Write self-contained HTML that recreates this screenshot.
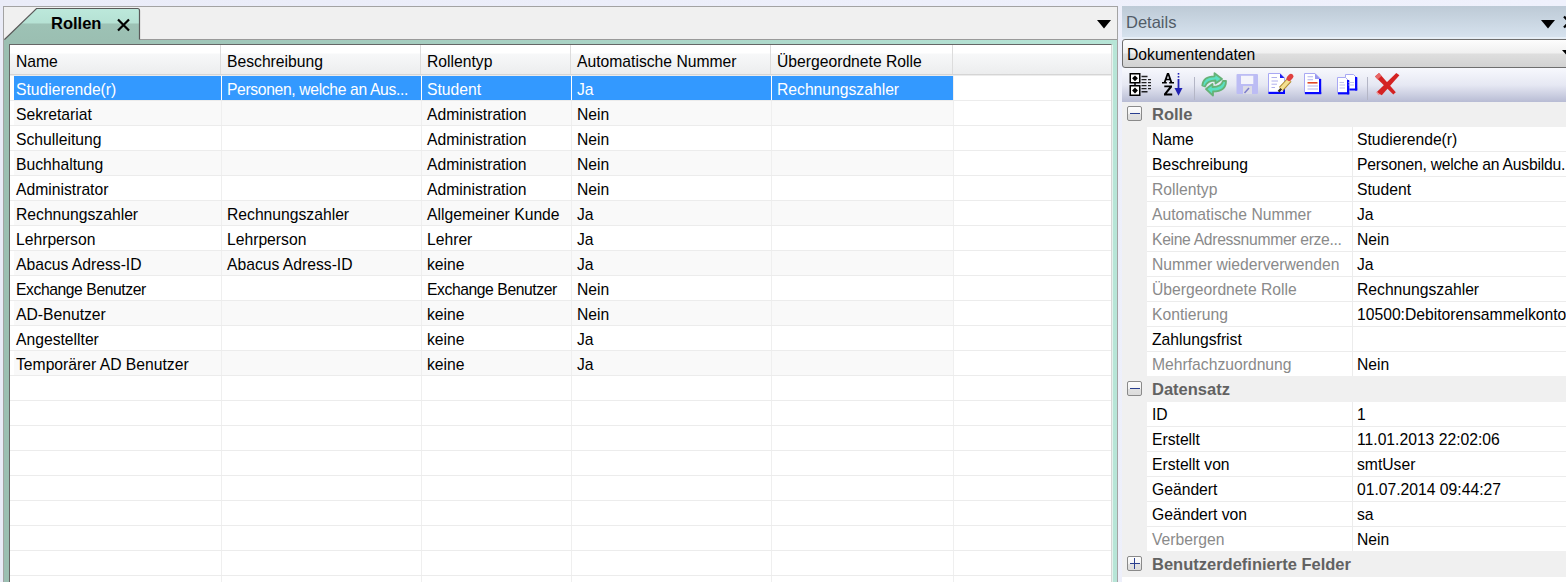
<!DOCTYPE html>
<html><head><meta charset="utf-8">
<style>
*{margin:0;padding:0;box-sizing:border-box}
html,body{width:1566px;height:582px;overflow:hidden;background:linear-gradient(to right,#eaecf8,#eff1fc);font-family:"Liberation Sans",sans-serif;font-size:15.7px;color:#000}
.a{position:absolute}
.t{position:absolute;white-space:nowrap;line-height:25px;height:25px}
#strip{left:3px;top:6px;width:1115px;height:600px;background:#f0f0f0;border:1px solid #a3a3a3}
#frame{left:4px;top:39px;width:1113px;height:560px;background:linear-gradient(to right,#9bbfb2,#b7e5d7);border-top:1px solid #9a9a9a}
#grid{left:9px;top:44px;width:1103px;height:560px;background:#fff;border-top:1px solid #666;border-left:1px solid #666;border-right:1px solid #d6d6d6}
#hdr{left:10px;top:45px;width:1101px;height:30px;background:linear-gradient(#fff 0,#fff 8px,#f7f8f9 9px,#ecedee 29px);border-bottom:1px solid #d5d5d5}
.hsep{position:absolute;top:45px;width:1px;height:29px;background:#dcdcdc}
.row{position:absolute;left:14px;width:1097px;height:24px}
.rl{position:absolute;left:10px;width:1101px;height:1px;background:#ececec}
.vsep{position:absolute;top:75px;width:1px;height:507px;background:#efefef}
#sel{left:14px;top:76px;width:939px;height:24px;background:#3399ff}
.selgap{position:absolute;top:76px;width:1px;height:24px;background:#fff}
.box{position:absolute;left:1127px;width:15px;height:15px;border:1px solid #8a8a8a;border-radius:2px;background:linear-gradient(#fdfdfd 0,#f4f4f4 50%,#e2e2e2 51%,#dcdcdc)}
</style></head><body>
<div id="strip" class="a"></div>
<div id="frame" class="a"></div>
<!-- tab -->
<svg class="a" style="left:0;top:0" width="160" height="46">
  <defs>
    <linearGradient id="tg" x1="0" y1="0" x2="0" y2="1">
      <stop offset="0" stop-color="#bce8db"/><stop offset="0.45" stop-color="#b6e2d4"/>
      <stop offset="0.5" stop-color="#9dc2b5"/><stop offset="1" stop-color="#9bbfb2"/>
    </linearGradient>
  </defs>
  <path d="M4.5,39.5 L36.5,8.5 L137.5,8.5 Q139.5,8.5 139.5,10.5 L139.5,40 L4.5,40 Z" fill="url(#tg)" stroke="none"/>
  <path d="M4.5,39.5 L36.5,8.5 L137.5,8.5 Q139.5,8.5 139.5,10.5 L139.5,39.5" fill="none" stroke="#5a5a5a" stroke-width="1.2"/>
  <rect x="4" y="40" width="136" height="4" fill="#9bbfb2"/>
</svg>
<div class="t" style="left:51px;top:11px;font-weight:bold;font-size:16.5px">Rollen</div>
<svg class="a" style="left:116px;top:18px" width="16" height="14"><path d="M2,1.5 L13,12.5 M13,1.5 L2,12.5" stroke="#000" stroke-width="2.2"/></svg>
<svg class="a" style="left:1096px;top:19px" width="16" height="10"><path d="M1,1 L15,1 L8,9.5 Z" fill="#000"/></svg>

<div id="grid" class="a"></div>
<div class="a" style="left:1112px;top:45px;width:1px;height:540px;background:#e4f3ee"></div>
<div id="hdr" class="a"></div>
<div class="hsep" style="left:220px"></div>
<div class="hsep" style="left:420px"></div>
<div class="hsep" style="left:570px"></div>
<div class="hsep" style="left:770px"></div>
<div class="hsep" style="left:952px"></div>
<div class="t" style="left:16px;top:49px">Name</div>
<div class="t" style="left:227px;top:49px">Beschreibung</div>
<div class="t" style="left:427px;top:49px">Rollentyp</div>
<div class="t" style="left:577px;top:49px">Automatische Nummer</div>
<div class="t" style="left:777px;top:49px">Übergeordnete Rolle</div>

<div class="a" style="left:14px;top:101px;width:939px;height:24px;background:#f9f9f9"></div>
<div class="a" style="left:14px;top:151px;width:939px;height:24px;background:#f9f9f9"></div>
<div class="a" style="left:14px;top:201px;width:939px;height:24px;background:#f9f9f9"></div>
<div class="a" style="left:14px;top:251px;width:939px;height:24px;background:#f9f9f9"></div>
<div class="a" style="left:14px;top:301px;width:939px;height:24px;background:#f9f9f9"></div>
<div class="a" style="left:14px;top:351px;width:939px;height:24px;background:#f9f9f9"></div>
<div class="vsep" style="left:221px"></div>
<div class="vsep" style="left:421px"></div>
<div class="vsep" style="left:571px"></div>
<div class="vsep" style="left:771px"></div>
<div class="vsep" style="left:953px"></div>
<div class="rl" style="top:75px"></div>
<div class="rl" style="top:100px"></div>
<div class="rl" style="top:125px"></div>
<div class="rl" style="top:150px"></div>
<div class="rl" style="top:175px"></div>
<div class="rl" style="top:200px"></div>
<div class="rl" style="top:225px"></div>
<div class="rl" style="top:250px"></div>
<div class="rl" style="top:275px"></div>
<div class="rl" style="top:300px"></div>
<div class="rl" style="top:325px"></div>
<div class="rl" style="top:350px"></div>
<div class="rl" style="top:375px"></div>
<div class="rl" style="top:400px"></div>
<div class="rl" style="top:425px"></div>
<div class="rl" style="top:450px"></div>
<div class="rl" style="top:475px"></div>
<div class="rl" style="top:500px"></div>
<div class="rl" style="top:525px"></div>
<div class="rl" style="top:550px"></div>
<div class="rl" style="top:575px"></div>
<div id="sel" class="a"></div>
<div class="selgap" style="left:221px"></div>
<div class="selgap" style="left:421px"></div>
<div class="selgap" style="left:571px"></div>
<div class="selgap" style="left:771px"></div>
<div class="t" style="left:16px;top:77px;color:#fff">Studierende(r)</div>
<div class="t" style="left:227px;top:77px;color:#fff"><span style="letter-spacing:-0.35px">Personen, welche an Aus...</span></div>
<div class="t" style="left:427px;top:77px;color:#fff">Student</div>
<div class="t" style="left:577px;top:77px;color:#fff">Ja</div>
<div class="t" style="left:777px;top:77px;color:#fff">Rechnungszahler</div>
<div class="t" style="left:16px;top:102px;color:#000">Sekretariat</div>
<div class="t" style="left:427px;top:102px;color:#000">Administration</div>
<div class="t" style="left:577px;top:102px;color:#000">Nein</div>
<div class="t" style="left:16px;top:127px;color:#000">Schulleitung</div>
<div class="t" style="left:427px;top:127px;color:#000">Administration</div>
<div class="t" style="left:577px;top:127px;color:#000">Nein</div>
<div class="t" style="left:16px;top:152px;color:#000">Buchhaltung</div>
<div class="t" style="left:427px;top:152px;color:#000">Administration</div>
<div class="t" style="left:577px;top:152px;color:#000">Nein</div>
<div class="t" style="left:16px;top:177px;color:#000">Administrator</div>
<div class="t" style="left:427px;top:177px;color:#000">Administration</div>
<div class="t" style="left:577px;top:177px;color:#000">Nein</div>
<div class="t" style="left:16px;top:202px;color:#000">Rechnungszahler</div>
<div class="t" style="left:227px;top:202px;color:#000">Rechnungszahler</div>
<div class="t" style="left:427px;top:202px;color:#000">Allgemeiner Kunde</div>
<div class="t" style="left:577px;top:202px;color:#000">Ja</div>
<div class="t" style="left:16px;top:227px;color:#000">Lehrperson</div>
<div class="t" style="left:227px;top:227px;color:#000">Lehrperson</div>
<div class="t" style="left:427px;top:227px;color:#000">Lehrer</div>
<div class="t" style="left:577px;top:227px;color:#000">Ja</div>
<div class="t" style="left:16px;top:252px;color:#000">Abacus Adress-ID</div>
<div class="t" style="left:227px;top:252px;color:#000">Abacus Adress-ID</div>
<div class="t" style="left:427px;top:252px;color:#000">keine</div>
<div class="t" style="left:577px;top:252px;color:#000">Ja</div>
<div class="t" style="left:16px;top:277px;color:#000"><span style="letter-spacing:-0.42px">Exchange Benutzer</span></div>
<div class="t" style="left:427px;top:277px;color:#000"><span style="letter-spacing:-0.42px">Exchange Benutzer</span></div>
<div class="t" style="left:577px;top:277px;color:#000">Nein</div>
<div class="t" style="left:16px;top:302px;color:#000">AD-Benutzer</div>
<div class="t" style="left:427px;top:302px;color:#000">keine</div>
<div class="t" style="left:577px;top:302px;color:#000">Nein</div>
<div class="t" style="left:16px;top:327px;color:#000">Angestellter</div>
<div class="t" style="left:427px;top:327px;color:#000">keine</div>
<div class="t" style="left:577px;top:327px;color:#000">Ja</div>
<div class="t" style="left:16px;top:352px;color:#000">Temporärer AD Benutzer</div>
<div class="t" style="left:427px;top:352px;color:#000">keine</div>
<div class="t" style="left:577px;top:352px;color:#000">Ja</div>

<!-- right panel -->
<div id="dethdr" class="a" style="left:1122px;top:6px;width:444px;height:33px;background:linear-gradient(#bdcad6,#d6e2ee 94%,#e6eef6 95%)"></div>
<div class="t" style="left:1126px;top:10px;font-size:16.5px;color:#525c68">Details</div>
<svg class="a" style="left:1540px;top:19px" width="16" height="10"><path d="M1,1 L15,1 L8,9.5 Z" fill="#000"/></svg>
<svg class="a" style="left:1560px;top:14px" width="6" height="16"><path d="M4,2.5 L14,13.5 M14,2.5 L4,13.5" stroke="#000" stroke-width="2.2"/></svg>

<div class="a" style="left:1122px;top:39px;width:460px;height:29px;border:1px solid #6e6e6e;border-radius:3px;background:linear-gradient(#fdfdfd 0,#f0f0f0 13px,#dedede 14px,#d2d2d2 27px)"></div>
<div class="t" style="left:1127px;top:42px">Dokumentendaten</div>
<svg class="a" style="left:1560px;top:49px" width="6" height="8"><path d="M2,1 L12,1 L7,6.5 Z" fill="#000"/></svg>
<div class="a" style="left:1122px;top:68px;width:444px;height:34px;background:linear-gradient(#f7f8fd,#e6e8f3 50%,#b8bcd4)"></div>
<svg class="a" style="left:1122px;top:66px" width="444" height="36" viewBox="1122 66 444 36">
 <!-- categorized -->
 <g fill="none" stroke="#000" stroke-width="1.5">
  <rect x="1130.25" y="73.75" width="9.5" height="9" fill="#fff"/>
  <rect x="1130.25" y="85.75" width="9.5" height="9.5" fill="#fff"/>
  <path d="M1135,83 V85.5"/>
 </g>
 <path d="M1135,75.4 L1137.9,78.3 L1135,81.2 L1132.1,78.3Z M1135,87.6 L1137.9,90.5 L1135,93.4 L1132.1,90.5Z" fill="#000"/>
 <g stroke="#000" stroke-width="1.4" opacity="0.85">
  <path d="M1141.5,76.5 H1147.5 M1141.5,79.6 H1146.5 M1148,79.6 H1151 M1141.5,82.6 H1146.5 M1148,82.6 H1151 M1141.5,85.6 H1146.5 M1148,85.6 H1151 M1141.5,88.6 H1146.5 M1148,88.6 H1151 M1141.5,91.7 H1147.5"/>
 </g>
 <!-- AZ -->
 <g fill="#000">
  <path d="M1167,73 H1169 L1172.2,82 H1174 V83.6 H1169.2 V82 H1170.3 L1169.6,80.3 H1166.4 L1165.7,82 H1166.8 V83.6 H1162 V82 H1163.8 Z M1166.9,78.8 H1169.1 L1168,75.6 Z"/>
  <path d="M1164.3,85.4 H1172 V87.2 L1166.8,93.6 H1172.2 V95.5 H1164 V93.7 L1169.2,87.3 H1164.3 Z"/>
 </g>
 <g fill="#2222b4">
  <rect x="1177.7" y="73" width="1.6" height="1.6"/>
  <rect x="1177.7" y="76" width="1.6" height="1.6"/>
  <rect x="1177.6" y="79" width="1.8" height="10"/>
  <path d="M1174.5,88 H1182.5 L1178.5,95.8 Z"/>
 </g>
 <!-- separators -->
 <rect x="1194" y="77" width="1" height="23" fill="#b4b6c6"/>
 <rect x="1367" y="77" width="1" height="23" fill="#b4b6c6"/>
 <!-- refresh -->
 <g stroke="#66b277" stroke-width="1.8" fill="#5ae0c2" stroke-linejoin="round">
  <path d="M1202.3,85.5 C1202.8,79.5 1207.5,76.3 1214.5,76.3 L1214.5,73.2 L1222,79 L1215.5,83.5 L1215.5,80.5 C1210,80.5 1206.5,82.3 1205,86.5 Z"/>
  <path d="M1226,81 C1226,87.5 1221.5,91.5 1213,91.5 L1213,95.6 L1206,89 L1212.5,84 L1212.5,87 C1218,87 1222,85 1223,81 Z"/>
 </g>
 <!-- save (disabled) -->
 <g>
  <rect x="1236.5" y="74" width="21.5" height="20" fill="#bcbcf4" rx="1"/>
  <rect x="1241" y="75.8" width="12.3" height="8.2" fill="#f4f4fb"/>
  <rect x="1243" y="86" width="9" height="8" fill="#dcdce6"/>
  <path d="M1244.5,93 L1249,88" stroke="#7c7ccc" stroke-width="1.5"/>
 </g>
 <!-- edit doc -->
 <g>
  <path d="M1268.5,73.5 H1280 L1284.5,78 V93.5 H1268.5 Z" fill="#fff" stroke="#a8a8f4" stroke-width="1"/>
  <path d="M1280,73.5 L1284.5,78 H1280 Z" fill="#1c1cf0"/>
  <rect x="1268.5" y="91.8" width="16.5" height="2.2" fill="#0808ff"/>
  <rect x="1283" y="84" width="2" height="10" fill="#0808ff"/>
  <path d="M1271.5,77.5 H1277 M1271.5,81 H1278 M1271.5,84.2 H1277 M1271.5,87.5 H1275" stroke="#b0b0ec" stroke-width="1"/>
  <path d="M1281,89 L1289.5,79.8" stroke="#b08a30" stroke-width="5.6"/>
  <path d="M1281,89 L1289.5,79.8" stroke="#f4e090" stroke-width="3.6"/>
  <path d="M1289,78.5 L1291,76.3" stroke="#e04040" stroke-width="5" stroke-linecap="round"/>
  <path d="M1278.6,91.6 L1281.2,88.8" stroke="#383020" stroke-width="2.4"/>
 </g>
 <!-- doc -->
 <g>
  <path d="M1304.5,73.5 H1315 L1320.5,79 V93.5 H1304.5 Z" fill="#fff" stroke="#a8a8f4" stroke-width="1"/>
  <path d="M1315,73.5 L1320.5,79 H1315 Z" fill="#9898f0"/>
  <rect x="1319" y="79" width="2.2" height="15" fill="#0808ff"/>
  <rect x="1305" y="92" width="16.2" height="2.2" fill="#0808ff"/>
  <path d="M1307.5,76.8 H1313 M1307.5,79.8 H1313 M1307.5,86 H1318 M1307.5,89 H1318" stroke="#b4b4ec" stroke-width="1.1"/>
  <path d="M1307.5,82.8 H1317.5" stroke="#e04828" stroke-width="1.6"/>
 </g>
 <!-- copy -->
 <g>
  <path d="M1345.5,74.5 H1353.5 L1357,78 V89.5 H1345.5 Z" fill="#fff" stroke="#a8a8f4" stroke-width="1"/>
  <rect x="1355" y="77" width="2.2" height="13.5" fill="#0808ff"/>
  <rect x="1347" y="88.5" width="10.2" height="2" fill="#0808ff"/>
  <path d="M1337.5,77.5 H1345.5 L1349,81 V93.5 H1337.5 Z" fill="#fff" stroke="#a8a8f4" stroke-width="1"/>
  <rect x="1347" y="80" width="2.2" height="14.3" fill="#0808ff"/>
  <rect x="1338" y="92.2" width="11.2" height="2.2" fill="#0808ff"/>
  <path d="M1339.5,82.5 H1344 M1339.5,85 H1345 M1339.5,88 H1345 M1348.5,82.5 H1354 M1348.5,85 H1354" stroke="#c4c4ec" stroke-width="1"/>
 </g>
 <!-- red X -->
 <path d="M1375,76.5 L1379,73 L1395.8,92.3 L1393.3,94.6 Z" fill="#d42222"/>
 <path d="M1396.3,73 L1399.4,75.3 L1381.8,95.2 L1376.6,92.2 Z" fill="#d42222"/>
 <path d="M1375,76.5 L1379,73 L1381.5,76 L1377.6,79.4 Z" fill="#e86868"/>
 <path d="M1377,91.5 L1380,94.8 L1378.5,95.3 L1376.3,92.5 Z" fill="#f09090"/>
</svg>

<div class="a" style="left:1122px;top:102px;width:444px;height:480px;background:#f0f0f0"></div>
<div class="box" style="top:106px"></div>
<div class="a" style="left:1130px;top:113px;width:10px;height:1px;background:#2a3f8f"></div>
<div class="t" style="left:1152px;top:102px;font-weight:bold;font-size:16.5px;color:#626262">Rolle</div>
<div class="a" style="left:1147px;top:127px;width:419px;height:24px;background:#fff"></div>
<div class="a" style="left:1352px;top:127px;width:1px;height:24px;background:#ececec"></div>
<div class="a" style="left:1147px;top:151px;width:419px;height:1px;background:#ececec"></div>
<div class="t" style="left:1152px;top:127px;color:#000">Name</div>
<div class="t" style="left:1357px;top:127px">Studierende(r)</div>
<div class="a" style="left:1147px;top:152px;width:419px;height:24px;background:#fff"></div>
<div class="a" style="left:1352px;top:152px;width:1px;height:24px;background:#ececec"></div>
<div class="a" style="left:1147px;top:176px;width:419px;height:1px;background:#ececec"></div>
<div class="t" style="left:1152px;top:152px;color:#000">Beschreibung</div>
<div class="t" style="left:1357px;top:152px"><span style="letter-spacing:-0.22px">Personen, welche an Ausbildu...</span></div>
<div class="a" style="left:1147px;top:177px;width:419px;height:24px;background:#fff"></div>
<div class="a" style="left:1352px;top:177px;width:1px;height:24px;background:#ececec"></div>
<div class="a" style="left:1147px;top:201px;width:419px;height:1px;background:#ececec"></div>
<div class="t" style="left:1152px;top:177px;color:#8a8a8a">Rollentyp</div>
<div class="t" style="left:1357px;top:177px">Student</div>
<div class="a" style="left:1147px;top:202px;width:419px;height:24px;background:#fff"></div>
<div class="a" style="left:1352px;top:202px;width:1px;height:24px;background:#ececec"></div>
<div class="a" style="left:1147px;top:226px;width:419px;height:1px;background:#ececec"></div>
<div class="t" style="left:1152px;top:202px;color:#8a8a8a">Automatische Nummer</div>
<div class="t" style="left:1357px;top:202px">Ja</div>
<div class="a" style="left:1147px;top:227px;width:419px;height:24px;background:#fff"></div>
<div class="a" style="left:1352px;top:227px;width:1px;height:24px;background:#ececec"></div>
<div class="a" style="left:1147px;top:251px;width:419px;height:1px;background:#ececec"></div>
<div class="t" style="left:1152px;top:227px;color:#8a8a8a"><span style="letter-spacing:-0.32px">Keine Adressnummer erze...</span></div>
<div class="t" style="left:1357px;top:227px">Nein</div>
<div class="a" style="left:1147px;top:252px;width:419px;height:24px;background:#fff"></div>
<div class="a" style="left:1352px;top:252px;width:1px;height:24px;background:#ececec"></div>
<div class="a" style="left:1147px;top:276px;width:419px;height:1px;background:#ececec"></div>
<div class="t" style="left:1152px;top:252px;color:#8a8a8a">Nummer wiederverwenden</div>
<div class="t" style="left:1357px;top:252px">Ja</div>
<div class="a" style="left:1147px;top:277px;width:419px;height:24px;background:#fff"></div>
<div class="a" style="left:1352px;top:277px;width:1px;height:24px;background:#ececec"></div>
<div class="a" style="left:1147px;top:301px;width:419px;height:1px;background:#ececec"></div>
<div class="t" style="left:1152px;top:277px;color:#8a8a8a">Übergeordnete Rolle</div>
<div class="t" style="left:1357px;top:277px">Rechnungszahler</div>
<div class="a" style="left:1147px;top:302px;width:419px;height:24px;background:#fff"></div>
<div class="a" style="left:1352px;top:302px;width:1px;height:24px;background:#ececec"></div>
<div class="a" style="left:1147px;top:326px;width:419px;height:1px;background:#ececec"></div>
<div class="t" style="left:1152px;top:302px;color:#8a8a8a">Kontierung</div>
<div class="t" style="left:1357px;top:302px">10500:Debitorensammelkonto</div>
<div class="a" style="left:1147px;top:327px;width:419px;height:24px;background:#fff"></div>
<div class="a" style="left:1352px;top:327px;width:1px;height:24px;background:#ececec"></div>
<div class="a" style="left:1147px;top:351px;width:419px;height:1px;background:#ececec"></div>
<div class="t" style="left:1152px;top:327px;color:#000">Zahlungsfrist</div>
<div class="a" style="left:1147px;top:352px;width:419px;height:24px;background:#fff"></div>
<div class="a" style="left:1352px;top:352px;width:1px;height:24px;background:#ececec"></div>
<div class="t" style="left:1152px;top:352px;color:#8a8a8a">Mehrfachzuordnung</div>
<div class="t" style="left:1357px;top:352px">Nein</div>
<div class="box" style="top:381px"></div>
<div class="a" style="left:1130px;top:388px;width:10px;height:1px;background:#2a3f8f"></div>
<div class="t" style="left:1152px;top:377px;font-weight:bold;font-size:16.5px;color:#626262">Datensatz</div>
<div class="a" style="left:1147px;top:402px;width:419px;height:24px;background:#fff"></div>
<div class="a" style="left:1352px;top:402px;width:1px;height:24px;background:#ececec"></div>
<div class="a" style="left:1147px;top:426px;width:419px;height:1px;background:#ececec"></div>
<div class="t" style="left:1152px;top:402px;color:#000">ID</div>
<div class="t" style="left:1357px;top:402px">1</div>
<div class="a" style="left:1147px;top:427px;width:419px;height:24px;background:#fff"></div>
<div class="a" style="left:1352px;top:427px;width:1px;height:24px;background:#ececec"></div>
<div class="a" style="left:1147px;top:451px;width:419px;height:1px;background:#ececec"></div>
<div class="t" style="left:1152px;top:427px;color:#000">Erstellt</div>
<div class="t" style="left:1357px;top:427px">11.01.2013 22:02:06</div>
<div class="a" style="left:1147px;top:452px;width:419px;height:24px;background:#fff"></div>
<div class="a" style="left:1352px;top:452px;width:1px;height:24px;background:#ececec"></div>
<div class="a" style="left:1147px;top:476px;width:419px;height:1px;background:#ececec"></div>
<div class="t" style="left:1152px;top:452px;color:#000">Erstellt von</div>
<div class="t" style="left:1357px;top:452px">smtUser</div>
<div class="a" style="left:1147px;top:477px;width:419px;height:24px;background:#fff"></div>
<div class="a" style="left:1352px;top:477px;width:1px;height:24px;background:#ececec"></div>
<div class="a" style="left:1147px;top:501px;width:419px;height:1px;background:#ececec"></div>
<div class="t" style="left:1152px;top:477px;color:#000">Geändert</div>
<div class="t" style="left:1357px;top:477px">01.07.2014 09:44:27</div>
<div class="a" style="left:1147px;top:502px;width:419px;height:24px;background:#fff"></div>
<div class="a" style="left:1352px;top:502px;width:1px;height:24px;background:#ececec"></div>
<div class="a" style="left:1147px;top:526px;width:419px;height:1px;background:#ececec"></div>
<div class="t" style="left:1152px;top:502px;color:#000">Geändert von</div>
<div class="t" style="left:1357px;top:502px">sa</div>
<div class="a" style="left:1147px;top:527px;width:419px;height:24px;background:#fff"></div>
<div class="a" style="left:1352px;top:527px;width:1px;height:24px;background:#ececec"></div>
<div class="t" style="left:1152px;top:527px;color:#8a8a8a">Verbergen</div>
<div class="t" style="left:1357px;top:527px">Nein</div>
<div class="box" style="top:556px"></div>
<div class="a" style="left:1130px;top:563px;width:10px;height:1px;background:#2a3f8f"></div>
<div class="a" style="left:1134px;top:558px;width:1px;height:11px;background:#2a3f8f"></div>
<div class="t" style="left:1152px;top:552px;font-weight:bold;font-size:16.5px;color:#626262">Benutzerdefinierte Felder</div>
<div class="a" style="left:1122px;top:577px;width:444px;height:5px;background:#fff"></div>
</body></html>
